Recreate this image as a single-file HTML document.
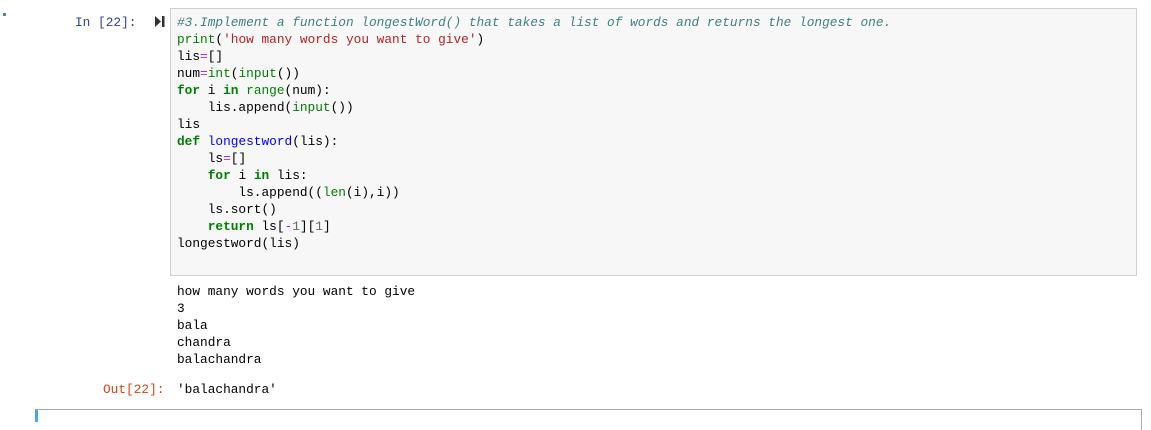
<!DOCTYPE html>
<html><head><style>
body{margin:0;background:#fff;width:1151px;height:422px;overflow:hidden;position:relative;font-family:"Liberation Mono",monospace;font-size:12.8px;}
.p{position:absolute;white-space:pre;line-height:17px;}
.box{position:absolute;left:170px;top:8px;width:965px;height:266px;background:#f7f7f7;border:1px solid #cfcfcf;}
.c{color:#408080;font-style:italic}.k{color:#008000;font-weight:bold}.b{color:#008000}.s{color:#ba2121}.o{color:#aa22ff}
</style></head><body>
<div style="position:absolute;left:3px;top:13px;width:3px;height:3px;background:#5a7fbf"></div>
<div class="p" style="left:75px;top:14px;color:#303f9f">In [22]:</div>
<svg style="position:absolute;left:155px;top:16px" width="10" height="11"><path d="M0 0 L6 5.5 L0 11Z" fill="#333"/><rect x="7" y="0" width="2.5" height="11" fill="#333"/></svg>
<div class="box"></div>
<div class="p" style="left:177px;top:14px;color:#000"><span class="c">#3.Implement a function longestWord() that takes a list of words and returns the longest one.</span>
<span class="b">print</span>(<span class="s">'how many words you want to give'</span>)
lis<span class="o">=</span>[]
num<span class="o">=</span><span class="b">int</span>(<span class="b">input</span>())
<span class="k">for</span> i <span class="k">in</span> <span class="b">range</span>(num):
    lis.append(<span class="b">input</span>())
lis
<span class="k">def</span> <span style="color:#0000ff">longestword</span>(lis):
    ls<span class="o">=</span>[]
    <span class="k">for</span> i <span class="k">in</span> lis:
        ls.append((<span class="b">len</span>(i),i))
    ls.sort()
    <span class="k">return</span> ls[<span class="o">-</span><span style="color:#666">1</span>][<span style="color:#666">1</span>]
longestword(lis)</div>
<div class="p" style="left:177px;top:283px;color:#000">how many words you want to give
3
bala
chandra
balachandra</div>
<div class="p" style="left:103px;top:381px;color:#d84315">Out[22]:</div>
<div class="p" style="left:177px;top:381px;color:#000">'balachandra'</div>
<div style="position:absolute;left:35px;top:409px;width:1106px;height:20px;border-top:1px solid #ababab;border-right:1px solid #ababab"></div>
<div style="position:absolute;left:35px;top:410px;width:3px;height:12px;background:#42a5f5"></div>
</body></html>
